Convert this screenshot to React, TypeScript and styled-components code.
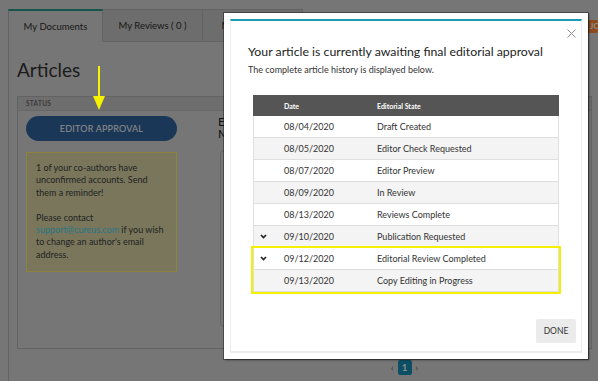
import React from "react";
import styled, { createGlobalStyle } from "styled-components";

interface iHistory {
  date: string;
  state: string;
  expand?: boolean;
}

const history: iHistory[] = [
  { date: "08/04/2020", state: "Draft Created" },
  { date: "08/05/2020", state: "Editor Check Requested" },
  { date: "08/07/2020", state: "Editor Preview" },
  { date: "08/09/2020", state: "In Review" },
  { date: "08/13/2020", state: "Reviews Complete" },
  { date: "09/10/2020", state: "Publication Requested", expand: true },
];

// the two rows outlined in yellow
const latest: iHistory[] = [
  { date: "09/12/2020", state: "Editorial Review Completed", expand: true },
  { date: "09/13/2020", state: "Copy Editing in Progress" },
];

const Chevron = () => (
  <svg width="7" height="5" viewBox="0 0 7 5">
    <path d="M1 1 L3.5 3.5 L6 1" fill="none" stroke="#222" strokeWidth="1.7" />
  </svg>
);

const App = () => {
  return (
    <>
      <GlobalStyle />
      <Page>
        <TabBar>
          <Tab $active>My Documents</Tab>
          <Tab>My Reviews ( 0 )</Tab>
          <Tab>My Collections</Tab>
          <JoinButton>JOIN</JoinButton>
        </TabBar>
        <Content>
          <Heading>Articles</Heading>
          <ArticleCard>
            <HeadRow>
              <HeadCell $width="201px">Status</HeadCell>
              <HeadCell>Title</HeadCell>
            </HeadRow>
            <BodyRow>
              <StatusCol>
                <StatusPill>Editor Approval</StatusPill>
                <Notice>
                  1 of your co-authors have unconfirmed accounts. Send them a
                  reminder!
                  <br />
                  <br />
                  Please contact <a href="#">support@cureus.com</a> if you wish
                  to change an author's email address.
                </Notice>
              </StatusCol>
              <TitleCol>
                <ArticleTitle>
                  E
                  <br />M
                </ArticleTitle>
                <InfoBox />
              </TitleCol>
            </BodyRow>
          </ArticleCard>
          <Pager>
            <PageArrow>‹</PageArrow>
            <PageNum>1</PageNum>
            <PageArrow>›</PageArrow>
          </Pager>
        </Content>
      </Page>

      <Backdrop />
      <Arrow width="14" height="46" viewBox="0 0 14 46">
        <rect x="6" y="0" width="2" height="32" fill="#f7f200" />
        <path d="M1 30 L13 30 L7 44 Z" fill="#f7f200" />
      </Arrow>

      <Modal>
        <ModalInner>
          <Close width="9" height="9" viewBox="0 0 9 9">
            <path d="M0.5 0.5 L8.5 8.5 M8.5 0.5 L0.5 8.5" stroke="#8a8a8a" strokeWidth="1" />
          </Close>
          <ModalTitle>Your article is currently awaiting final editorial approval</ModalTitle>
          <ModalSub>The complete article history is displayed below.</ModalSub>
          <HistoryTable>
            <HistoryHead>
              <span />
              <span>Date</span>
              <span>Editorial State</span>
            </HistoryHead>
            {history.map((h, i) => (
              <HistoryRow key={h.date} $shade={i % 2 === 1}>
                <span>{h.expand ? <Chevron /> : null}</span>
                <span>{h.date}</span>
                <span>{h.state}</span>
              </HistoryRow>
            ))}
            <Highlight>
              {latest.map((h, i) => (
                <HistoryRow key={h.date} $shade={i % 2 === 1}>
                  <span>{h.expand ? <Chevron /> : null}</span>
                  <span>{h.date}</span>
                  <span>{h.state}</span>
                </HistoryRow>
              ))}
            </Highlight>
          </HistoryTable>
          <ModalFooter>
            <DoneButton>Done</DoneButton>
          </ModalFooter>
        </ModalInner>
      </Modal>
    </>
  );
};

export default App;

const GlobalStyle = createGlobalStyle`
  html, body {
    margin: 0;
    padding: 0;
    background: #d8d8d8;
    font-family: Lato, "Open Sans", sans-serif;
    overflow: hidden;
  }
  * {
    box-sizing: border-box;
  }
`;

const Page = styled.div`
  width: 598px;
  height: 381px;
  padding: 9px 0 0 8px;
  background: #d8d8d8;
`;

const TabBar = styled.div`
  display: flex;
  align-items: stretch;
  height: 33px;
`;

const Tab = styled.div<{ $active?: boolean }>`
  display: flex;
  align-items: center;
  justify-content: center;
  width: ${(p) => (p.$active ? "95px" : "100px")};
  font-size: 9.5px;
  color: #2e2e2e;
  background: ${(p) => (p.$active ? "#d8d8d8" : "#c6c6c6")};
  border: 1px solid #b4b4b4;
  border-top: ${(p) => (p.$active ? "2px solid #2d9a91" : "1px solid #b4b4b4")};
  border-bottom: ${(p) => (p.$active ? "none" : "1px solid #b4b4b4")};
  border-left: ${(p) => (p.$active ? "1px solid #b4b4b4" : "none")};
`;

const JoinButton = styled.div`
  margin: 11px 0 0 auto;
  width: 60px;
  height: 13px;
  padding-left: 52px;
  background: #ff8837;
  color: #fff;
  font-size: 8px;
  font-weight: 700;
  line-height: 13px;
  border-radius: 2px;
  overflow: hidden;
  white-space: nowrap;
`;

const Content = styled.div`
  border-left: 1px solid #b4b4b4;
  padding: 16px 6px 0 8px;
  height: 339px;
`;

const Heading = styled.h1`
  margin: 0;
  font-size: 19px;
  line-height: 24px;
  font-weight: 400;
  color: #333;
`;

const ArticleCard = styled.div`
  margin-top: 14px;
  border: 1px solid #b4b4b4;
  height: 253px;
`;

const HeadRow = styled.div`
  display: flex;
  height: 14px;
  align-items: center;
  background: #c8c8c8;
  border-bottom: 1px solid #bcbcbc;
  padding-left: 8px;
`;

const HeadCell = styled.div<{ $width?: string }>`
  width: ${(p) => p.$width || "auto"};
  font-size: 6.5px;
  font-weight: 700;
  letter-spacing: 0.3px;
  text-transform: uppercase;
  color: #6a6a6a;
`;

const BodyRow = styled.div`
  display: flex;
  gap: 41px;
  padding: 5px 0 0 8px;
`;

const StatusCol = styled.div`
  width: 151px;
  display: flex;
  flex-direction: column;
  gap: 11px;
`;

const StatusPill = styled.div`
  height: 25px;
  border-radius: 13px;
  background: #31649e;
  color: #fff;
  font-size: 9px;
  line-height: 25px;
  text-align: center;
  text-transform: uppercase;
  letter-spacing: 0.2px;
`;

const Notice = styled.div`
  padding: 9px 6px 10px 9px;
  background: #dcd8a7;
  border: 1px solid #ffef70;
  font-size: 9px;
  line-height: 12.4px;
  color: #404040;
  a {
    color: #48d8ec;
    text-decoration: none;
  }
`;

const TitleCol = styled.div`
  display: flex;
  flex-direction: column;
  gap: 10px;
`;

const ArticleTitle = styled.div`
  font-size: 12px;
  line-height: 12px;
  color: #222;
`;

const InfoBox = styled.div`
  width: 200px;
  height: 177px;
  margin-left: 2px;
  border: 1px solid #b4b4b4;
  border-radius: 4px;
`;

const Pager = styled.div`
  display: flex;
  align-items: center;
  gap: 4px;
  margin-top: 11px;
  padding-left: 374px;
`;

const PageArrow = styled.span`
  font-size: 9px;
  color: #555;
`;

const PageNum = styled.span`
  width: 14px;
  height: 15px;
  background: #1691b6;
  color: #fff;
  font-size: 9px;
  font-weight: 700;
  text-align: center;
  line-height: 15px;
  border-radius: 2px;
`;

const Backdrop = styled.div`
  position: absolute;
  inset: 0;
  background: rgba(0, 0, 0, 0.45);
`;

const Arrow = styled.svg`
  position: absolute;
  left: 92px;
  top: 66px;
`;

const Modal = styled.div`
  position: absolute;
  left: 224px;
  top: 13px;
  width: 364px;
  height: 346px;
  padding: 6px;
  background: #fff;
  box-shadow: 0 0 0 1px rgba(0, 0, 0, 0.35), 1px 1px 2px rgba(0, 0, 0, 0.5);
`;

const ModalInner = styled.div`
  position: relative;
  height: 100%;
  display: flex;
  flex-direction: column;
  border: 1px solid #ececec;
  border-top: 2px solid #1a9bb7;
  border-bottom: 2px solid #ececec;
  padding: 23px 0 0 17px;
`;

const Close = styled.svg`
  position: absolute;
  top: 8px;
  right: 5px;
`;

const ModalTitle = styled.h2`
  margin: 0;
  font-size: 12.3px;
  line-height: 16px;
  font-weight: 400;
  color: #222;
`;

const ModalSub = styled.p`
  margin: 4px 0 0;
  font-size: 9px;
  line-height: 12px;
  color: #333;
`;

const HistoryTable = styled.div`
  margin: 19px 0 0 5px;
  width: 306px;
  border-left: 1px solid #e0e0e0;
  border-right: 1px solid #e0e0e0;
`;

const gridCols = `
  display: grid;
  grid-template-columns: 30px 93px 1fr;
  align-items: center;
`;

const HistoryHead = styled.div`
  ${gridCols}
  height: 21px;
  margin: 0 -1px;
  padding-left: 1px;
  background: #555;
  color: #fff;
  font-size: 7px;
  font-weight: 700;
`;

const HistoryRow = styled.div<{ $shade: boolean }>`
  ${gridCols}
  height: 22px;
  background: ${(p) => (p.$shade ? "#f4f4f4" : "#fff")};
  border-bottom: 1px solid #dedede;
  font-size: 9px;
  color: #333;
  span:first-child {
    display: flex;
    padding-left: 6px;
  }
`;

const Highlight = styled.div`
  outline: 2px solid #f5f000;
  outline-offset: 0;
  margin: 0 -1px;
  padding: 0 1px;
`;

const ModalFooter = styled.div`
  margin-top: auto;
  display: flex;
  justify-content: flex-end;
  padding: 0 5px 8px 0;
`;

const DoneButton = styled.button`
  width: 40px;
  height: 24px;
  border: none;
  border-radius: 2px;
  background: #ebebeb;
  color: #333;
  font-family: inherit;
  font-size: 8.5px;
  text-transform: uppercase;
  padding: 0;
`;
